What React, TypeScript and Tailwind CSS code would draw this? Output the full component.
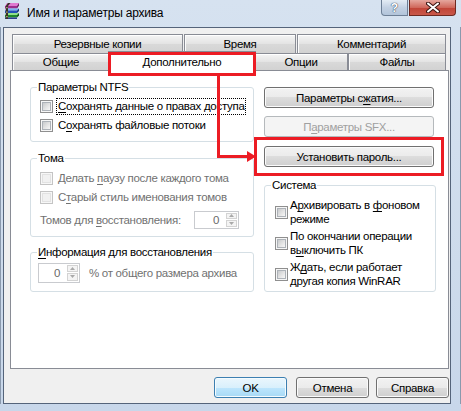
import * as React from "react";

const U = ({ children }: { children: React.ReactNode }) => (
  <span className="underline decoration-1 underline-offset-[2px]">{children}</span>
);

const CheckBox = ({ disabled = false }: { disabled?: boolean }) => (
  <span
    className={
      disabled
        ? "flex h-[13px] w-[13px] shrink-0 items-center justify-center border border-[#c4c4c4] bg-[#f7f7f7]"
        : "flex h-[13px] w-[13px] shrink-0 items-center justify-center border border-[#8f8f8f] bg-[#f6f6f6]"
    }
  >
    <span
      className={
        disabled
          ? "h-[9px] w-[9px] border border-[#e2e2e2] bg-[#f1f1f1]"
          : "h-[9px] w-[9px] border border-[#adb2b8] bg-[linear-gradient(135deg,#c8cacc_0%,#e4e4e4_55%,#f7f7f7_100%)]"
      }
    />
  </span>
);

const Spinner = ({ box }: { box: string }) => (
  <span className={`flex ${box} border border-[#c9cbcf] bg-white`}>
    <span className="flex flex-1 items-center justify-end pr-[6px] text-[#6a6a6a]">0</span>
    <span className="flex w-[13px] flex-col gap-px p-px">
      <span className="flex flex-1 items-center justify-center border border-[#d3d3d3] bg-[#f4f4f4]">
        <svg width="5" height="3" viewBox="0 0 5 3">
          <path d="M0 3L2.5 0L5 3z" fill="#a9a9a9" />
        </svg>
      </span>
      <span className="flex flex-1 items-center justify-center border border-[#d3d3d3] bg-[#f4f4f4]">
        <svg width="5" height="3" viewBox="0 0 5 3">
          <path d="M0 0L2.5 3L5 0z" fill="#a9a9a9" />
        </svg>
      </span>
    </span>
  </span>
);

type BtnKind = "normal" | "disabled" | "default";

const btnStyles: Record<BtnKind, string> = {
  normal:
    "border-[#707070] bg-[linear-gradient(to_bottom,#f2f2f2_0%,#ebebeb_50%,#dddddd_50%,#cfcfcf_100%)] shadow-[inset_0_0_0_1px_#fbfbfb] text-black",
  disabled: "border-[#b5b9bc] bg-[#f4f4f4] text-[#a0a0a0]",
  default:
    "border-[#3c7fb1] bg-[linear-gradient(to_bottom,#eaf6fd_0%,#d9f0fc_50%,#bee6fd_50%,#a7d9f5_100%)] shadow-[inset_0_0_0_1px_#f4fbfe] text-black",
};

const Button = ({
  children,
  kind = "normal",
  size,
}: {
  children: React.ReactNode;
  kind?: BtnKind;
  size: string;
}) => (
  <div
    className={`flex ${size} items-center justify-center rounded-[3px] border ${btnStyles[kind]}`}
  >
    {children}
  </div>
);

const tabBg =
  "border border-b-0 border-[#898c95] bg-[linear-gradient(to_bottom,#f5f5f5,#e3e3e3_50%,#d9d9d9_51%,#d2d2d2)] shadow-[inset_0_1px_0_#ffffff,inset_1px_0_0_#fbfbfb]";

const RarIcon = () => (
  <svg width="19" height="18" viewBox="0 0 19 18" className="ml-[3px] mt-[2px] shrink-0">
    <path d="M4 1h12l-2 3H2z" fill="#e07ad0" />
    <path d="M2 4h12v2.5H2z" fill="#9b2d8c" />
    <path d="M14 4l2-3v2.5l-2 3z" fill="#6d1c62" />
    <path d="M4 6.5h12l-2 2H2z" fill="#7fb2f0" />
    <path d="M2 8.5h12V11H2z" fill="#2350b8" />
    <path d="M14 8.5l2-2V9l-2 2z" fill="#163478" />
    <path d="M4 11h12l-2 2H2z" fill="#8fe08a" />
    <path d="M2 13h12v2.5H2z" fill="#1f8a2c" />
    <path d="M14 13l2-2v2.5l-2 2z" fill="#0f5a1a" />
    <path d="M2 15.5h12V17H2z" fill="#2a3f8f" />
    <path d="M5 1h2.5L5 4v13H2.8V4z" fill="#3a3228" />
    <path d="M3.3 5h1.2v1.2H3.3zM3.3 9.5h1.2v1.2H3.3zM3.3 14h1.2v1.2H3.3z" fill="#d8c89a" />
  </svg>
);

export default function App() {
  return (
    <div className="relative flex h-[411px] w-[461px] flex-col overflow-hidden bg-[linear-gradient(to_bottom,#d6e2f0,#c8d7ea)] font-['Liberation_Sans',Arial,sans-serif] text-[11.5px] leading-[14px] tracking-[-0.3px] text-black">
      {/* caption bar */}
      <div className="flex h-[27px] shrink-0">
        <RarIcon />
        <span className="ml-[5px] mt-[5px] whitespace-nowrap text-[12px] leading-[16px] tracking-[-0.2px]">
          Имя и параметры архива
        </span>
        <div className="ml-auto mr-[5px] flex h-[16px] gap-px tracking-normal">
          <div className="flex w-[27px] items-center justify-center rounded-bl-[4px] border border-t-0 border-[#6d7f96] bg-[linear-gradient(to_bottom,#e4ecf5,#c3d1e3_50%,#b2c4da)] text-[12px] font-bold leading-none text-white [text-shadow:0_0_1px_#2b3a4f,0_0_1px_#2b3a4f]">
            ?
          </div>
          <div className="flex w-[47px] items-center justify-center rounded-br-[4px] border border-t-0 border-[#6e2a22] bg-[linear-gradient(to_bottom,#e5a79e,#d0685c_50%,#c04336_51%,#c9584a)]">
            <svg width="14" height="11" viewBox="0 0 14 11">
              <path d="M2 1.5l10 8M12 1.5l-10 8" stroke="#3b1512" strokeWidth="4" strokeLinecap="round" />
              <path d="M2 1.5l10 8M12 1.5l-10 8" stroke="#ffffff" strokeWidth="2" strokeLinecap="round" />
            </svg>
          </div>
        </div>
      </div>

      <div className="flex flex-1">
        <div className="w-[3px] border-l border-[#8a99ad]" />

        {/* client area */}
        <div className="flex w-[448px] flex-col border border-[#55647a] bg-[#f0f0f0]">
          {/* tab headers */}
          <div className="pl-[8px] pt-[6px]">
            <div className="flex h-[19px]">
              <div className={`flex w-[171px] items-center justify-center ${tabBg}`}>Резервные копии</div>
              <div className={`ml-px flex w-[112px] items-center justify-center ${tabBg}`}>Время</div>
              <div className={`ml-px flex w-[149px] items-center justify-center ${tabBg}`}>Комментарий</div>
            </div>
            <div className="flex h-[17px]">
              <div className={`flex w-[98px] items-center justify-center ${tabBg}`}>Общие</div>
              <div className="relative z-10 -mx-[2px] -mt-[2px] flex h-[20px] w-[148px] items-center justify-center border border-b-0 border-[#898c95] bg-white">
                Дополнительно
              </div>
              <div className={`flex w-[94px] items-center justify-center ${tabBg}`}>Опции</div>
              <div className={`flex w-[98px] items-center justify-center ${tabBg}`}>Файлы</div>
            </div>
          </div>

          {/* tab page */}
          <div className="ml-[6px] flex h-[299px] w-[439px] border border-[#898c95] bg-white">
            <div className="flex w-[243px] flex-col pl-[19px] pt-[9px]">
              <fieldset className="rounded-[3px] border border-[#d5dfe5] pb-[7px] pl-[9px] pt-[4px]">
                <legend className="ml-[-3px] px-[1px] leading-[14px]">Параметры NTFS</legend>
                <div className="flex h-[17px] items-center gap-[3px]">
                  <CheckBox />
                  <span className="whitespace-nowrap border border-dotted border-black px-px leading-[15px]">
                    <U>С</U>охранять данные о правах доступа
                  </span>
                </div>
                <div className="mt-[2px] flex h-[17px] items-center gap-[3px]">
                  <CheckBox />
                  <span className="whitespace-nowrap border border-transparent px-px leading-[15px]">
                    С<U>о</U>хранять файловые потоки
                  </span>
                </div>
              </fieldset>

              <fieldset className="mt-[9px] rounded-[3px] border border-[#d5dfe5] pb-[7px] pl-[9px] pt-[5px]">
                <legend className="ml-[-3px] px-[1px] leading-[14px]">Тома</legend>
                <div className="flex h-[17px] items-center gap-[3px] text-[#717171]">
                  <CheckBox disabled />
                  <span className="whitespace-nowrap border border-transparent px-px leading-[15px]">
                    Делать <U>п</U>аузу после каждого тома
                  </span>
                </div>
                <div className="mt-[2px] flex h-[17px] items-center gap-[3px] text-[#717171]">
                  <CheckBox disabled />
                  <span className="whitespace-nowrap border border-transparent px-px leading-[15px]">
                    С<U>т</U>арый стиль именования томов
                  </span>
                </div>
                <div className="mt-[4px] flex h-[19px] items-center justify-between pr-[14px] text-[#717171]">
                  <span className="whitespace-nowrap">
                    Томов для <U>в</U>осстановления:
                  </span>
                  <Spinner box="h-[18px] w-[45px]" />
                </div>
              </fieldset>

              <fieldset className="mt-[8px] rounded-[3px] border border-[#d5dfe5] pb-[9px] pl-[7px] pt-[4px]">
                <legend className="ml-[-1px] px-[1px] leading-[14px]">
                  <U>И</U>нформация для восстановления
                </legend>
                <div className="flex h-[19px] items-center gap-[9px] text-[#717171]">
                  <Spinner box="h-[20px] w-[42px]" />
                  <span className="whitespace-nowrap">% от общего размера архива</span>
                </div>
              </fieldset>
            </div>

            <div className="ml-[10px] flex w-[172px] flex-col pt-[16px]">
              <Button size="h-[21px] w-[170px]">
                <span>
                  Параметры с<U>ж</U>атия...
                </span>
              </Button>
              <div className="mt-[8px]">
                <Button size="h-[21px] w-[170px]" kind="disabled">
                  <span>
                    П<U>а</U>раметры SFX...
                  </span>
                </Button>
              </div>
              <div className="mt-[9px]">
                <Button size="h-[21px] w-[170px]">Установить пароль...</Button>
              </div>

              <fieldset className="mt-[11px] rounded-[3px] border border-[#d5dfe5] pb-[3px] pl-[10px] pt-[6px]">
                <legend className="ml-[-4px] px-[1px] leading-[14px]">Система</legend>
                <div className="flex flex-col gap-[3px]">
                  <div className="flex h-[28px] items-center gap-[2px]">
                    <CheckBox />
                    <span className="whitespace-nowrap leading-[14px]">
                      А<U>р</U>хивировать в <U>ф</U>оновом
                      <br />
                      режиме
                    </span>
                  </div>
                  <div className="flex h-[28px] items-center gap-[2px]">
                    <CheckBox />
                    <span className="whitespace-nowrap leading-[14px]">
                      По окончании операции
                      <br />в<U>ы</U>ключить ПК
                    </span>
                  </div>
                  <div className="flex h-[28px] items-center gap-[2px]">
                    <CheckBox />
                    <span className="whitespace-nowrap leading-[14px]">
                      Ж<U>д</U>ать, если работает
                      <br />
                      другая копия WinRAR
                    </span>
                  </div>
                </div>
              </fieldset>
            </div>
          </div>

          {/* dialog buttons */}
          <div className="ml-[6px] mt-[8px] flex w-[439px] justify-end">
            <Button size="h-[21px] w-[73px]" kind="default">
              OK
            </Button>
            <div className="ml-[9px]">
              <Button size="h-[21px] w-[73px]">Отмена</Button>
            </div>
            <div className="ml-[7px]">
              <Button size="h-[21px] w-[73px]">Справка</Button>
            </div>
          </div>
        </div>

        <div className="w-[10px] border-r border-[#8a99ad]" />
      </div>
      <div className="h-[7px] shrink-0" />

      {/* red call-out marks */}
      <div className="pointer-events-none absolute left-[108px] top-[52px] z-20 h-[24px] w-[148px] border-[3px] border-[#ec1c24]" />
      <div className="pointer-events-none absolute left-[254px] top-[137px] z-20 h-[39px] w-[190px] border-[3px] border-[#ec1c24]" />
      <svg className="pointer-events-none absolute left-0 top-0 z-20" width="461" height="411">
        <path d="M218.5 75V156.5H249" fill="none" stroke="#ec1c24" strokeWidth="3" />
        <path d="M247 151L256 156.5L247 162z" fill="#ec1c24" />
      </svg>
    </div>
  );
}
